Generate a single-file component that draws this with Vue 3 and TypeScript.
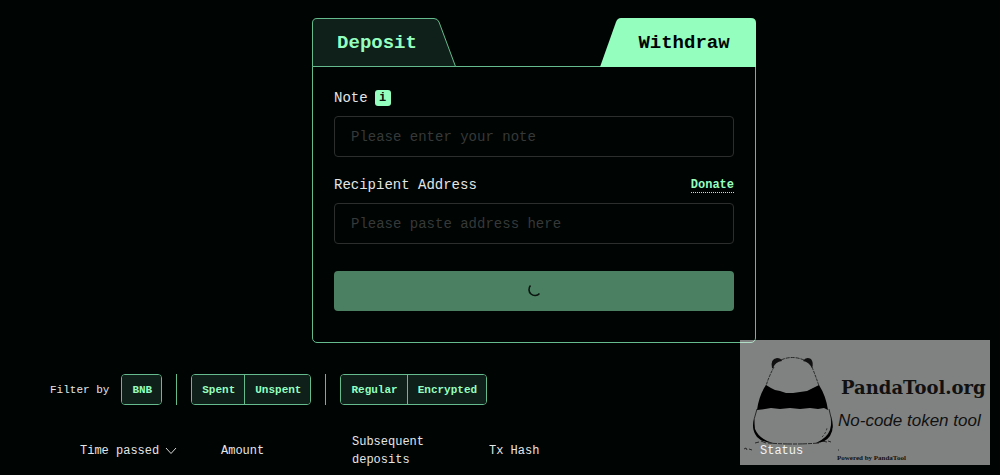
<script setup lang="ts">
import { ref } from 'vue'

type Tab = 'deposit' | 'withdraw'

const tab = ref<Tab>('withdraw')
const note = ref('')
const recipient = ref('')

const filterGroups: string[][] = [['BNB'], ['Spent', 'Unspent'], ['Regular', 'Encrypted']]
</script>

<template>
  <main class="page">
    <section class="card">
      <div class="tabs" role="tablist">
        <button class="tab deposit" type="button" role="tab" :aria-selected="tab === 'deposit'" @click="tab = 'deposit'">
          <svg class="tab-shape" viewBox="0 0 144 49" aria-hidden="true">
            <path d="M.5 48.500V5Q.5.5 5 .5H122Q125.500 .5 127 4L143.500 48.500Z" fill="#0f1f19" stroke="#65bb8d" />
          </svg>
          <span>Deposit</span>
        </button>
        <button class="tab withdraw" type="button" role="tab" :aria-selected="tab === 'withdraw'" @click="tab = 'withdraw'">
          <svg class="tab-shape" viewBox="0 0 156 49" aria-hidden="true">
            <path d="M0 49L16 4Q17.500 0 21 0H151Q156 0 156 5V49Z" fill="#94febf" />
          </svg>
          <span>Withdraw</span>
        </button>
      </div>
      <form class="panel" @submit.prevent>
        <div class="label-row">
          <label for="note">Note</label>
          <button class="info" type="button" aria-label="About notes">i</button>
        </div>
        <input id="note" v-model="note" class="field" type="text" placeholder="Please enter your note" />
        <div class="label-row second">
          <label for="recipient">Recipient Address</label>
          <a class="donate" href="#donate">Donate</a>
        </div>
        <input id="recipient" v-model="recipient" class="field" type="text" placeholder="Please paste address here" />
        <button class="submit" type="submit" aria-label="Loading" disabled>
          <svg width="14" height="14" viewBox="0 0 14 14" aria-hidden="true">
            <path d="M3.500 1.500A6 6 0 1 0 12.500 9.500" fill="none" stroke="#0b1510" stroke-width="1.600" />
          </svg>
        </button>
      </form>
    </section>

    <section class="filters" aria-label="Filters">
      <span class="filter-title">Filter by</span>
      <template v-for="(group, index) in filterGroups" :key="index">
        <span v-if="index > 0" class="divider"></span>
        <div class="group">
          <button v-for="name in group" :key="name" type="button">{{ name }}</button>
        </div>
      </template>
    </section>

    <table class="history">
      <colgroup>
        <col class="c-time" />
        <col class="c-amount" />
        <col class="c-deposits" />
        <col class="c-hash" />
        <col />
      </colgroup>
      <thead>
        <tr>
          <th scope="col">
            <button class="sort" type="button">
              Time passed
              <svg width="12" height="8" viewBox="0 0 12 8" aria-hidden="true">
                <path d="M1 1L6 6.500L11 1" fill="none" stroke="#d8d8d8" />
              </svg>
            </button>
          </th>
          <th scope="col">Amount</th>
          <th scope="col" class="wrap">Subsequent deposits</th>
          <th scope="col">Tx Hash</th>
          <th scope="col">Status</th>
        </tr>
      </thead>
    </table>

    <aside class="brand">
      <svg class="panda" viewBox="0 0 100 125" aria-hidden="true">
        <g fill="none" stroke="#111" stroke-width=".8">
          <path d="M41 20Q52 15 64 20" stroke-dasharray="4 1" />
          <path d="M34 27Q29 36 26 46M72 27Q76 37 79 46" stroke-dasharray="3 1" />
          <path d="M17 69Q13 79 14 88M89 69Q92 79 92 88" />
          <path d="M28 103Q54 105 79 103" stroke-dasharray="9 1 4 1" />
          <path d="M82 97Q86 93 87 88" stroke-dasharray="2 2" />
          <path d="M15 103l4-1M21 101l5 2M82 101l5 1M88 101l3 1M4 109l2-1 1 2M9 109l3 1M98 110h1" />
        </g>
        <path d="M32 28Q30 19 37 18Q41 18 42 21Q35 22 33 28ZM63 21Q66 16 71 19Q74 23 72 28Q69 22 63 21Z" fill="#111" />
        <path d="M26 45L31 48L35 50L40 51L46 53L53 53L60 52L67 51L73 48L79 45Q86 56 88 70L84 68L78 69L70 68L60 69L50 68L40 69L31 68L25 69L17 70Q19 55 26 45Z" fill="#000" />
        <path d="M14 79Q11 89 17 97Q23 103 33 103Q19 99 15 89Q14 84 14 79ZM91 76Q95 88 90 96Q85 103 76 103Q87 98 90 90Q92 83 91 76Z" fill="#000" />
      </svg>
      <strong class="brand-name">PandaTool.org</strong>
      <em class="brand-line">No-code token tool</em>
      <small class="brand-foot">Powered by PandaTool</small>
    </aside>
  </main>
</template>

<style>
body {
  margin: 0;
  background: #000403;
}
</style>

<style scoped>
.page {
  position: relative;
  min-height: 100vh;
  box-sizing: border-box;
  padding-top: 18px;
  color: #e4e6e5;
  background: #000403;
  font: 14px/18px "Liberation Mono", monospace;
}

button,
input {
  font: inherit;
}

.card {
  max-width: 444px;
  margin-left: calc(50% - 188px);
}

.tabs {
  display: flex;
  justify-content: space-between;
  height: 48px;
}

.tab {
  position: relative;
  height: 49px;
  padding: 0;
  border: 0;
  background: none;
  font-size: 19px;
  font-weight: 700;
  cursor: pointer;
}

.tab span {
  position: relative;
}

.tab-shape {
  position: absolute;
  inset: 0;
  width: 100%;
  height: 100%;
}

.deposit {
  width: 144px;
  padding-right: 14px;
  color: #94febf;
}

.withdraw {
  width: 156px;
  padding-left: 12px;
  color: #000403;
}

.panel {
  display: flex;
  flex-direction: column;
  padding: 22px 21px 31px;
  border: 1px solid #65bb8d;
  border-radius: 0 0 5px 5px;
}

.label-row {
  display: flex;
  align-items: center;
  height: 18px;
  margin-bottom: 9px;
}

.label-row.second {
  justify-content: space-between;
  margin-top: 19px;
}

.info {
  width: 16px;
  height: 16px;
  margin-left: 7px;
  padding: 0;
  border: 0;
  border-radius: 3px;
  color: #0b1510;
  background: #94febf;
  font-size: 12px;
  font-weight: 700;
  line-height: 16px;
}

.donate {
  color: #94febf;
  border-bottom: 1px dotted #94febf;
  font-size: 12px;
  font-weight: 700;
  line-height: 14px;
  text-decoration: none;
}

.field {
  box-sizing: border-box;
  width: 100%;
  height: 41px;
  padding: 0 16px;
  border: 1px solid #2b2e2d;
  border-radius: 4px;
  color: #e4e6e5;
  background: transparent;
}

.field::placeholder {
  color: #363938;
  opacity: 1;
}

.submit {
  display: flex;
  align-items: center;
  justify-content: center;
  height: 40px;
  margin-top: 27px;
  border: 0;
  border-radius: 4px;
  background: #4b8162;
}

.filters {
  display: flex;
  align-items: center;
  gap: 14px;
  margin: 31px 0 0 50px;
  font-size: 11px;
}

.filter-title {
  margin-right: -2px;
}

.divider {
  width: 1px;
  height: 31px;
  background: #65bb8d;
}

.group {
  display: flex;
  overflow: hidden;
  border: 1px solid #65bb8d;
  border-radius: 4px;
}

.group button {
  height: 29px;
  padding: 0 9px 0 10px;
  border: 0;
  color: #94febf;
  background: #0f1f19;
  font-weight: 700;
}

.group button + button {
  border-left: 1px solid #65bb8d;
}

.history {
  width: calc(100% - 80px);
  margin: 28px 0 0 80px;
  border-collapse: collapse;
  table-layout: fixed;
  font-size: 12px;
}

.history th {
  padding: 0;
  font-weight: 400;
  text-align: left;
}

.history .wrap {
  padding-right: 20px;
}

.c-time {
  width: 141px;
}

.c-amount {
  width: 131px;
}

.c-deposits {
  width: 137px;
}

.c-hash {
  width: 271px;
}

.sort {
  display: flex;
  align-items: center;
  gap: 6px;
  padding: 0;
  border: 0;
  color: inherit;
  background: none;
}

.brand {
  position: absolute;
  right: 10px;
  bottom: 10px;
  display: grid;
  grid-template-columns: 97px 1fr;
  grid-template-rows: 63px 36px 26px;
  width: 250px;
  height: 125px;
  color: #111;
  background: rgba(255, 255, 255, 0.5);
}

.panda {
  grid-row: 1 / 4;
  width: 100px;
  height: 125px;
}

.brand-name {
  align-self: end;
  padding: 0 0 5px 4px;
  font: 700 18px/20px "DejaVu Serif", serif;
}

.brand-line {
  align-self: center;
  padding-left: 1px;
  font: italic 17px/18px "Liberation Sans", sans-serif;
}

.brand-foot {
  align-self: end;
  padding-bottom: 2px;
  font: 700 7px/10px "Liberation Serif", serif;
}
</style>
